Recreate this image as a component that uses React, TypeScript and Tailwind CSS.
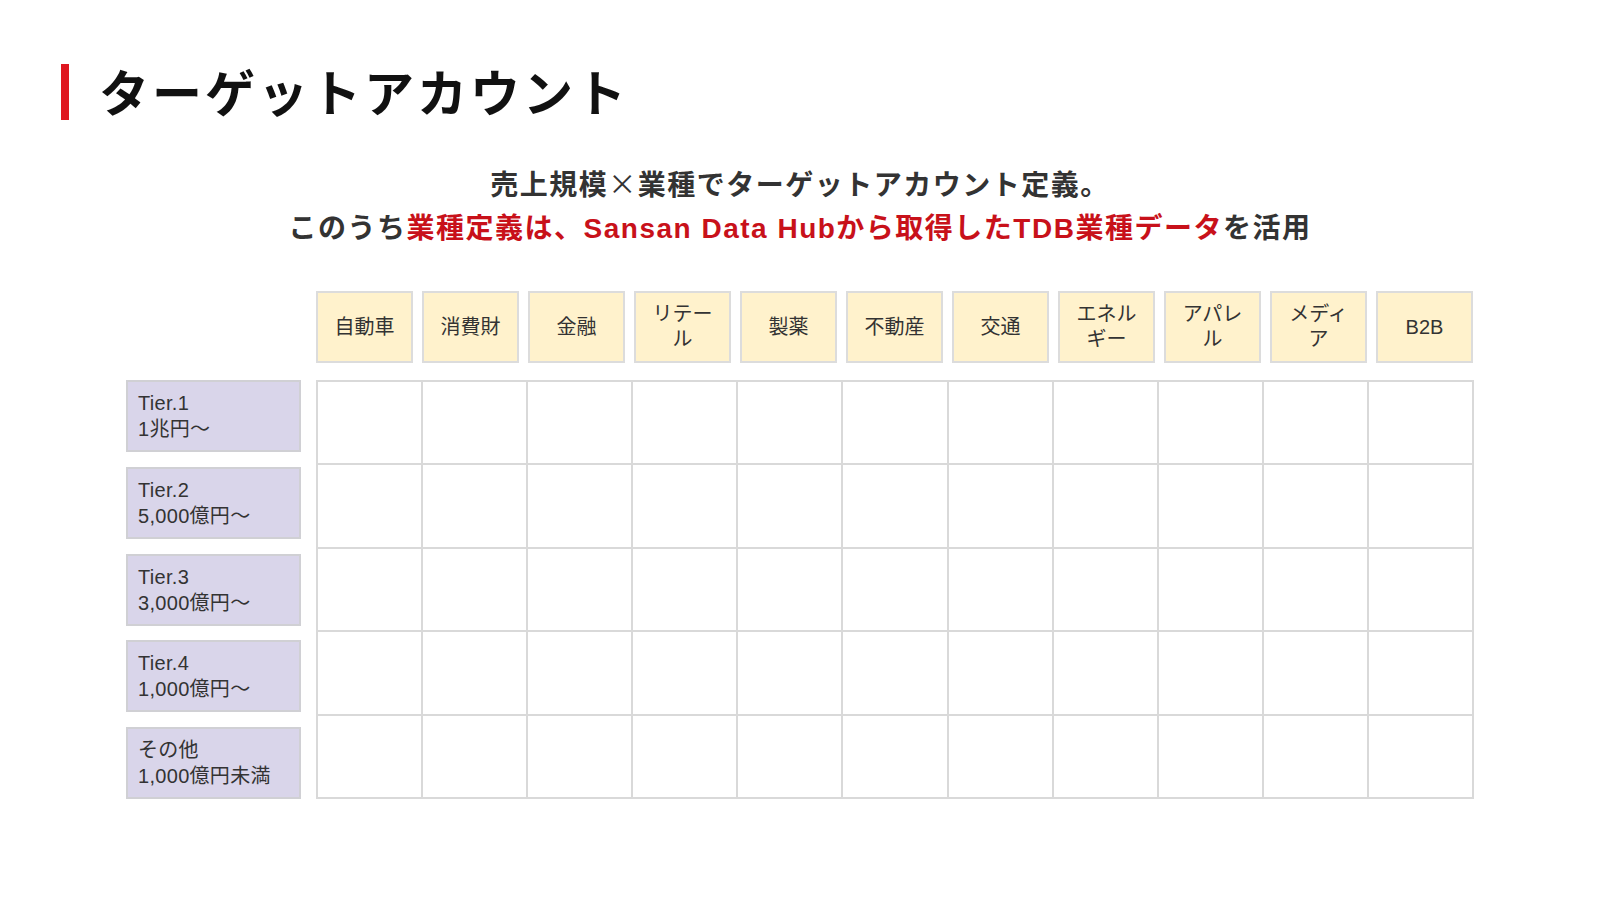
import React from "react";

const headers: string[][] = [
  ["自動車"],
  ["消費財"],
  ["金融"],
  ["リテー", "ル"],
  ["製薬"],
  ["不動産"],
  ["交通"],
  ["エネル", "ギー"],
  ["アパレ", "ル"],
  ["メディ", "ア"],
  ["B2B"],
];

const tiers: [string, string][] = [
  ["Tier.1", "1兆円〜"],
  ["Tier.2", "5,000億円〜"],
  ["Tier.3", "3,000億円〜"],
  ["Tier.4", "1,000億円〜"],
  ["その他", "1,000億円未満"],
];

const font = {
  fontFamily: '"Liberation Sans", "Noto Sans CJK JP", sans-serif',
};
const cjk = {
  fontFamily: '"Noto Sans CJK JP", "Noto Sans", sans-serif',
};

export default function App() {
  return (
    <div className="w-[1600px] h-[900px] bg-white overflow-hidden" style={font}>
      <div className="flex items-center pl-[61px] pt-[64px]">
        <div className="w-[8px] h-[56px] bg-[#df1720]" />
        <h1
          className="ml-[30px] -mt-[5px] text-[50px] leading-[50px] font-bold tracking-[3px] text-[#111]"
          style={cjk}
        >
          ターゲットアカウント
        </h1>
      </div>

      <div
        className="mt-[44px] text-center text-[28px] leading-[43px] font-bold text-[#333] tracking-[1.5px]"
        style={font}
      >
        <div className="h-[43px]">
          売上規模<span className="font-normal leading-none" style={cjk}>×</span>業種でターゲットアカウント定義。
        </div>
        <div className="h-[43px]">
          このうち
          <span className="text-[#c8111a]">
            業種定義は、Sansan Data Hubから取得したTDB業種データ
          </span>
          を活用
        </div>
      </div>

      <div className="ml-[126px] mt-[41px]">
        <div className="flex">
          <div className="w-[175px] shrink-0" />
          <div className="ml-[15px] flex gap-[9px]">
            {headers.map((h, i) => (
              <div
                key={i}
                className="w-[97px] h-[72px] bg-[#fff2cc] border-2 border-[#dcdcdc] flex flex-col items-center justify-center text-[20px] leading-[25px] text-[#333]"
              >
                {h.map((l, j) => (
                  <div key={j}>{l}</div>
                ))}
              </div>
            ))}
          </div>
        </div>

        <div className="flex mt-[17px]">
          <div className="w-[175px] h-[419px] flex flex-col justify-between shrink-0">
            {tiers.map(([a, b], i) => (
              <div
                key={i}
                className="h-[72px] bg-[#d9d5ea] border-2 border-[#d0d0d4] flex flex-col justify-center pl-[10px] text-[20px] leading-[26px] text-[#333] tracking-[0.3px]"
              >
                <div>{a}</div>
                <div>{b}</div>
              </div>
            ))}
          </div>
          <div className="ml-[15px] w-[1158px] h-[419px] grid grid-cols-11 grid-rows-5 gap-[2px] p-[2px] bg-[#d9d9d9]">
            {Array.from({ length: 55 }).map((_, i) => (
              <div key={i} className="bg-white" />
            ))}
          </div>
        </div>
      </div>
    </div>
  );
}
